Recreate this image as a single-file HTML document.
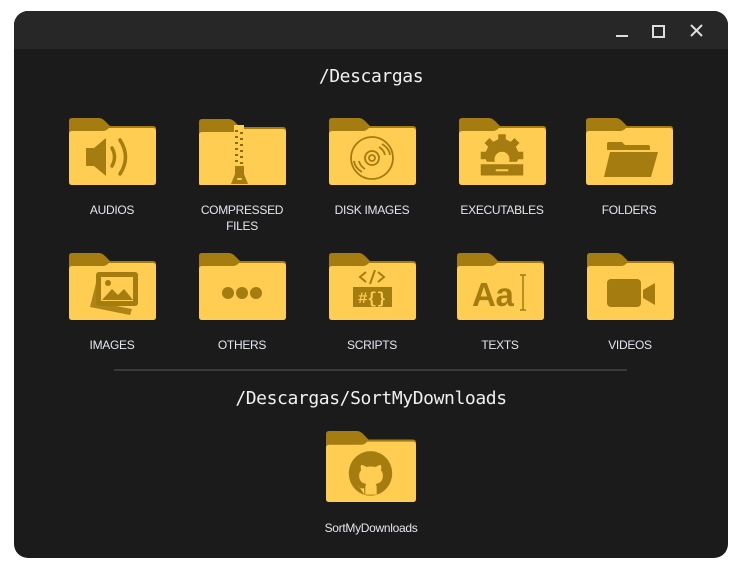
<!DOCTYPE html>
<html><head><meta charset="utf-8"><style>
html,body{margin:0;padding:0;background:#fff;width:742px;height:570px;overflow:hidden}
.win{position:absolute;left:14px;top:11px;width:714px;height:547px;background:#1b1b1b;border-radius:14px;overflow:hidden}
.tb{position:absolute;left:0;top:0;width:714px;height:38px;background:#272727}
.h{position:absolute;left:0;width:714px;text-align:center;color:#f0f0f0;font:18px "DejaVu Sans Mono","Liberation Mono",monospace;letter-spacing:-0.4px}
.it{position:absolute;width:130px;text-align:center;color:#e4e6ee;font:12px "Liberation Sans",sans-serif;line-height:16px;letter-spacing:-0.3px}
.it svg{display:block;margin:0 auto 17px}
.sep{position:absolute;left:100px;top:358px;width:513px;height:2px;background:#3a3a3a}
</style></head><body>
<svg width="0" height="0" style="position:absolute"><defs>
<symbol id="f" viewBox="0 0 87 67">
<path d="M0 3Q0 0 3 0H30Q33 0 36 3L41 8H84Q87 8 87 11V22H0Z" fill="#a47c10"/>
<path d="M0 16Q0 13 3 13H34Q37 13 40 10H84Q87 10 87 13V64Q87 67 84 67H3Q0 67 0 64Z" fill="#fecd52"/>
</symbol></defs></svg>
<div class="win">
<div class="tb">
<div style="position:absolute;left:602px;top:24px;width:12px;height:2px;background:#ddd"></div>
<div style="position:absolute;left:638px;top:14px;width:9px;height:9px;border:2px solid #ddd"></div>
<svg style="position:absolute;left:676px;top:13px" width="13" height="13"><path d="M1 1L12 12M12 1L1 12" stroke="#ddd" stroke-width="2"/></svg>
</div>
<div class="h" style="top:55px">/Descargas</div>

<!-- row 1 -->
<div class="it" style="left:33px;top:107px"><svg width="87" height="67"><use href="#f"/><g fill="#a47c10"><path d="M17 30h8l12-10v38l-12-10h-8z"/><path d="M43 30q5 9 0 18" stroke="#a47c10" stroke-width="3.5" fill="none" stroke-linecap="round"/><path d="M51 22q11 17 0 34" stroke="#a47c10" stroke-width="3.5" fill="none" stroke-linecap="round"/></g></svg>AUDIOS</div>
<div class="it" style="left:163px;top:105px"><svg width="87" height="69" viewBox="0 -2 87 69"><use href="#f"/><rect x="35" y="7" width="10" height="42" fill="#fecd52"/><g fill="#8f6a08"><rect x="36" y="12" width="3" height="2"/><rect x="41" y="14" width="3" height="2"/><rect x="36" y="18" width="3" height="2"/><rect x="41" y="20" width="3" height="2"/><rect x="36" y="24" width="3" height="2"/><rect x="41" y="26" width="3" height="2"/><rect x="36" y="30" width="3" height="2"/><rect x="41" y="32" width="3" height="2"/><rect x="36" y="36" width="3" height="2"/><rect x="41" y="38" width="3" height="2"/><rect x="36" y="42" width="3" height="2"/><rect x="41" y="44" width="3" height="2"/></g><path d="M36 48h9v8l4 10h-17l4-10z" fill="#a47c10"/><rect x="38" y="60" width="5" height="2" rx="1" fill="#fecd52"/></svg>COMPRESSED<br>FILES</div>
<div class="it" style="left:293px;top:107px"><svg width="87" height="67"><use href="#f"/><g fill="none" stroke="#a47c10" stroke-width="1.8"><circle cx="43" cy="40" r="21"/><circle cx="43" cy="40" r="7"/><circle cx="43" cy="40" r="3"/><path d="M50 29q5 3 6 8M53 26q7 4 8 11M36 51q-5-3-6-8M33 54q-7-4-8-11"/></g></svg>DISK IMAGES</div>
<div class="it" style="left:423px;top:107px"><svg width="87" height="67"><g transform="translate(43 40) scale(1.25) translate(-43 -40)"><use href="#f" transform="translate(43 40) scale(.8) translate(-43 -40)"/><g fill="#a47c10"><path d="M40 21h6v4l4 2 3-3 4 4-3 3 2 4h4v6h-4l-1 2h-24l-1-2h-4v-6h4l2-4-3-3 4-4 3 3 4-2z"/><circle cx="43" cy="41" r="6" fill="#fecd52"/><rect x="26" y="45" width="34" height="9"/><rect x="38" y="49" width="10" height="1.6" fill="#fecd52"/></g></g></svg>EXECUTABLES</div>
<div class="it" style="left:550px;top:107px"><svg width="87" height="67"><use href="#f"/><g fill="#a47c10"><path d="M21 26q0-2 2-2h13l3 3h23q2 0 2 2v3H21z"/><path d="M24 34h48l-7 25H18z"/></g></svg>FOLDERS</div>

<!-- row 2 -->
<div class="it" style="left:33px;top:242px"><svg width="87" height="67"><use href="#f"/><g fill="#a47c10"><path d="M27 30l-6 24 40 8 2-6-32-6z" opacity=".9"/><rect x="27" y="19" width="42" height="34" rx="3"/><rect x="32" y="24" width="32" height="24" fill="#fecd52"/><circle cx="39" cy="30" r="3"/><path d="M33 47l10-11 6 6 6-6 9 11z"/></g></svg>IMAGES</div>
<div class="it" style="left:163px;top:242px"><svg width="87" height="67"><use href="#f"/><g fill="#a47c10"><circle cx="29" cy="40" r="6"/><circle cx="43" cy="40" r="6"/><circle cx="57" cy="40" r="6"/></g></svg>OTHERS</div>
<div class="it" style="left:293px;top:242px"><svg width="87" height="67"><use href="#f"/><g fill="none" stroke="#a47c10" stroke-width="2"><path d="M37 19l-6 5 6 5M49 19l6 5-6 5M46 17l-5 14"/></g><rect x="24" y="34" width="39" height="20" fill="#a47c10"/><text x="43" y="50" text-anchor="middle" font-family="Liberation Mono,monospace" font-weight="bold" font-size="16" fill="#fecd52">#{}</text></svg>SCRIPTS</div>
<div class="it" style="left:421px;top:242px"><svg width="87" height="67"><use href="#f"/><text x="15" y="53" font-family="Liberation Sans,sans-serif" font-weight="bold" font-size="33" fill="#a47c10">Aa</text><path d="M66 22v35M63 22h6M63 57h6" stroke="#a47c10" stroke-width="1.5"/></svg>TEXTS</div>
<div class="it" style="left:551px;top:242px"><svg width="87" height="67"><use href="#f"/><g fill="#a47c10"><rect x="20" y="26" width="34" height="28" rx="4"/><path d="M56 37l12-7v22l-12-7z"/></g></svg>VIDEOS</div>

<div class="sep"></div>
<div class="h" style="top:377px">/Descargas/SortMyDownloads</div>

<div class="it" style="left:292px;top:420px"><svg width="90" height="71" viewBox="0 0 87 67" preserveAspectRatio="none" style="margin-bottom:18px"><use href="#f"/><circle cx="43" cy="40" r="21" fill="#a47c10"/><path d="M37 60v-6q-5 1-6-3M49 60v-6q0-3-1-4 7-1 7-8 0-3-2-5 1-3 0-5-2 0-5 2-5-1-9 0-3-2-5-2-1 2 0 5-2 2-2 5 0 7 7 8-1 1-1 4v6" fill="#fecd52"/></svg>SortMyDownloads</div>
</div>
</body></html>
